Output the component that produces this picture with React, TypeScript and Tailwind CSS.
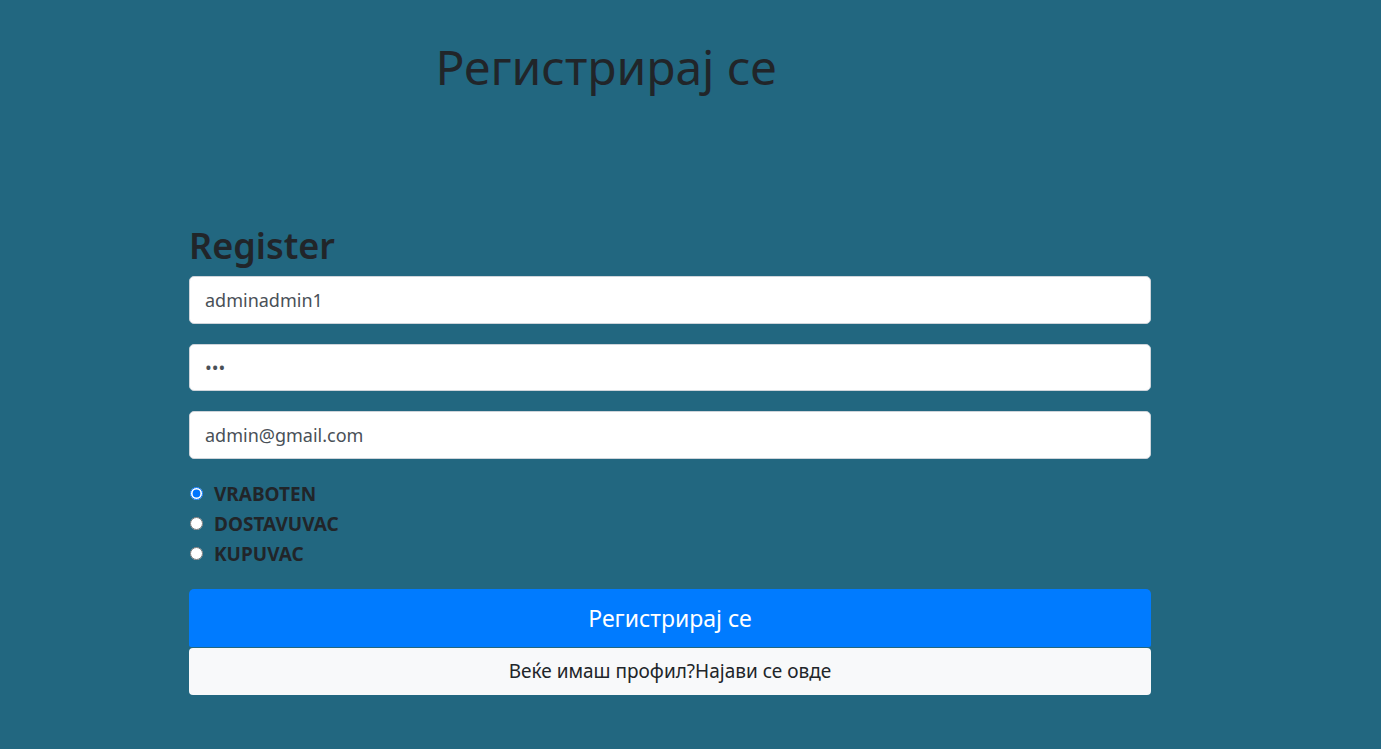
import { useState } from "react";

export default function App() {
  const [username, setUsername] = useState("adminadmin1");
  const [password, setPassword] = useState("abc");
  const [email, setEmail] = useState("admin@gmail.com");
  const [role, setRole] = useState("VRABOTEN");

  const roles = ["VRABOTEN", "DOSTAVUVAC", "KUPUVAC"];

  return (
    <div
      className="min-h-screen bg-[#226780] text-[#212529]"
      style={{ fontFamily: '"Noto Sans", "Open Sans", sans-serif' }}
    >
      <div className="ml-[189px] w-[962px] pt-[38px]">
        <div className="w-[834px] text-center">
          <h1 className="text-[48px] leading-[1.2] font-normal">Регистрирај се</h1>
        </div>

        <h2 className="mt-[128px] text-[36px] leading-[1.2] font-semibold">Register</h2>

        <form className="mt-[9px] flex flex-col" onSubmit={(e) => e.preventDefault()}>
          <input
            type="text"
            value={username}
            onChange={(e) => setUsername(e.target.value)}
            className="h-[48px] w-full rounded-[5px] border border-[#ced4da] bg-white px-[15px] text-[18px] text-[#495057] outline-none"
          />
          <input
            type="password"
            value={password}
            onChange={(e) => setPassword(e.target.value)}
            className="mt-[20px] h-[47px] w-full rounded-[5px] border border-[#ced4da] bg-white px-[15px] text-[18px] text-[#495057] outline-none"
          />
          <input
            type="email"
            value={email}
            onChange={(e) => setEmail(e.target.value)}
            className="mt-[20px] h-[48px] w-full rounded-[5px] border border-[#ced4da] bg-white px-[15px] text-[18px] text-[#495057] outline-none"
          />

          <div className="mt-[20px] flex flex-col">
            {roles.map((r) => (
              <label key={r} className="flex h-[30px] items-center gap-[11px] text-[19px] font-bold">
                <input
                  type="radio"
                  name="role"
                  checked={role === r}
                  onChange={() => setRole(r)}
                  className="m-0 ml-[1px] h-[13px] w-[13px]"
                />
                {r}
              </label>
            ))}
          </div>

          <button
            type="submit"
            className="mt-[20px] h-[58px] w-full rounded-t-[5px] rounded-b-[2px] bg-[#007bff] text-[23px] text-white"
          >
            Регистрирај се
          </button>
          <button
            type="button"
            className="mt-[1px] h-[47px] w-full rounded-[4px] bg-[#f8f9fa] text-[19px] text-[#212529]"
          >
            Веќе имаш профил?Најави се овде
          </button>
        </form>
      </div>
    </div>
  );
}
